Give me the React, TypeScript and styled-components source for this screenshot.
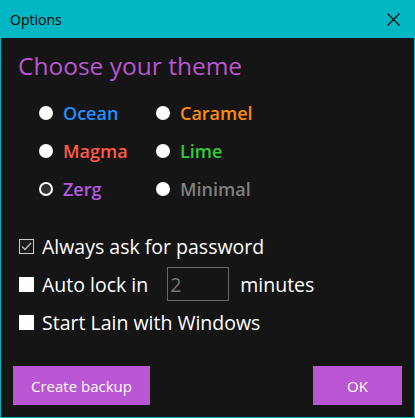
import React from "react";
import styled, { createGlobalStyle } from "styled-components";

const Global = createGlobalStyle`
  html, body { margin: 0; padding: 0; background: #151515; }
  body { font-family: "Open Sans", "Noto Sans", sans-serif; }
`;

const Window = styled.div`
  width: 415px;
  height: 418px;
  box-sizing: border-box;
  border: 1px solid #00b7c3;
  border-top: none;
  background: #151515;
  display: flex;
  flex-direction: column;
`;

const TitleBar = styled.div`
  height: 38px;
  flex: none;
  background: #00b7c3;
  margin: 0 -1px;
  display: flex;
  align-items: center;
  justify-content: space-between;
  padding: 0 15px 0 10px;
  box-sizing: border-box;
`;

const Title = styled.span`
  font-size: 14px;
  color: #000;
`;

const Close = styled.svg`
  width: 13px;
  height: 13px;
  display: block;
`;

const Body = styled.div`
  flex: 1;
  display: flex;
  flex-direction: column;
  padding: 11px 12px 12px 18px;
`;

const Heading = styled.h1`
  margin: 0 0 0 -1px;
  font-size: 24.5px;
  font-weight: 400;
  color: #ba55d3;
  line-height: 33px;
`;

const ThemeGrid = styled.div`
  display: grid;
  grid-template-columns: 117px 117px;
  grid-auto-rows: 38px;
  margin: 12px 0 0 20px;
`;

const ThemeOption = styled.div`
  display: flex;
  align-items: center;
  gap: 10px;
`;

const Radio = styled.span<{ $checked?: boolean }>`
  width: 14px;
  height: 14px;
  border-radius: 50%;
  box-sizing: border-box;
  background: ${(p) => (p.$checked ? "#333" : "#fff")};
  border: 2px solid #fff;
  flex: none;
`;

const ThemeLabel = styled.span<{ $color: string }>`
  font-size: 18px;
  font-weight: 600;
  color: ${(p) => p.$color};
`;

const Options = styled.div`
  display: flex;
  flex-direction: column;
  margin-top: 19px;
`;

const OptionRow = styled.div`
  display: flex;
  align-items: center;
  height: 38px;
  gap: 8px;
`;

const Check = styled.span<{ $checked?: boolean }>`
  width: 15px;
  height: 15px;
  box-sizing: border-box;
  flex: none;
  background: ${(p) => (p.$checked ? "#1b1b1b" : "#fff")};
  border: 1px solid ${(p) => (p.$checked ? "#ccc" : "#fff")};
  display: flex;
  align-items: center;
  justify-content: center;
`;

const OptionLabel = styled.span`
  font-size: 19.5px;
  color: #fff;
`;

const NumberBox = styled.div`
  width: 62px;
  height: 34px;
  box-sizing: border-box;
  border: 1px solid #666;
  color: #777;
  font-size: 19.5px;
  display: flex;
  align-items: center;
  padding-left: 2px;
  margin: 0 3px 0 11px;
`;

const Footer = styled.div`
  margin-top: auto;
  display: flex;
  justify-content: space-between;
  margin-left: -6px;
`;

const Button = styled.button<{ $width: number }>`
  width: ${(p) => p.$width}px;
  height: 39px;
  border: none;
  background: #ba55d3;
  color: #fff;
  font-family: inherit;
  font-size: 15px;
  padding: 0;
`;

const themes = [
  { name: "Ocean", color: "#1e90ff" },
  { name: "Caramel", color: "#ff8c00" },
  { name: "Magma", color: "#ff5a45" },
  { name: "Lime", color: "#32cd32" },
  { name: "Zerg", color: "#b35be0", checked: true },
  { name: "Minimal", color: "#808080" },
];

export default function App() {
  return (
    <>
      <Global />
      <Window>
        <TitleBar>
          <Title>Options</Title>
          <Close viewBox="0 0 13 13">
            <path d="M0.5 0.5 L12.5 12.5 M12.5 0.5 L0.5 12.5" stroke="#000" strokeWidth="1.1" />
          </Close>
        </TitleBar>
        <Body>
          <Heading>Choose your theme</Heading>
          <ThemeGrid>
            {themes.map((t) => (
              <ThemeOption key={t.name}>
                <Radio $checked={t.checked} />
                <ThemeLabel $color={t.color}>{t.name}</ThemeLabel>
              </ThemeOption>
            ))}
          </ThemeGrid>
          <Options>
            <OptionRow>
              <Check $checked>
                <svg width="11" height="9" viewBox="0 0 11 9">
                  <path d="M1 4.5 L4 7.5 L10 1" stroke="#bbb" strokeWidth="1.4" fill="none" />
                </svg>
              </Check>
              <OptionLabel>Always ask for password</OptionLabel>
            </OptionRow>
            <OptionRow>
              <Check />
              <OptionLabel>Auto lock in</OptionLabel>
              <NumberBox>2</NumberBox>
              <OptionLabel>minutes</OptionLabel>
            </OptionRow>
            <OptionRow>
              <Check />
              <OptionLabel>Start Lain with Windows</OptionLabel>
            </OptionRow>
          </Options>
          <Footer>
            <Button $width={137}>Create backup</Button>
            <Button $width={89}>OK</Button>
          </Footer>
        </Body>
      </Window>
    </>
  );
}
